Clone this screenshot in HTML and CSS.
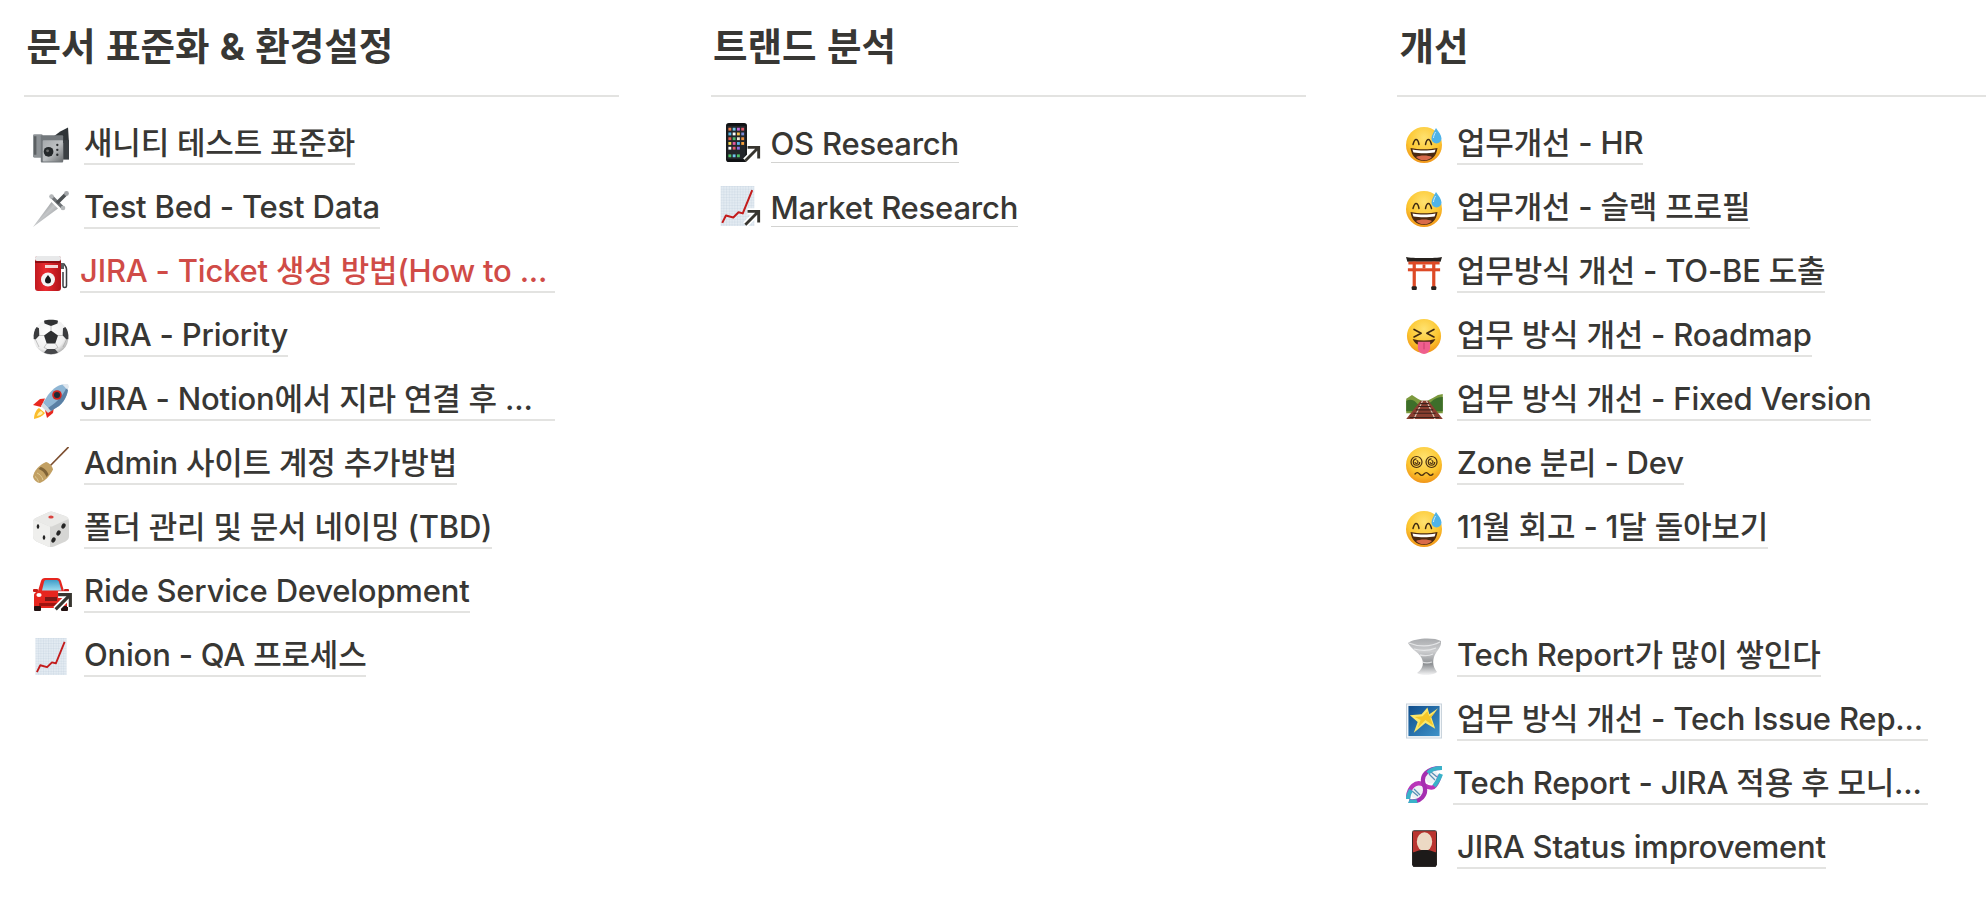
FILE: index.html
```html
<!DOCTYPE html>
<html lang="ko">
<head>
<meta charset="utf-8">
<title>문서 목록</title>
<link rel="stylesheet" href="styles.css">
</head>
<body>
<svg class="sprite" xmlns="http://www.w3.org/2000/svg">
<defs>
<radialGradient id="face" cx="50%" cy="30%" r="75%"><stop offset="0" stop-color="#ffe270"/><stop offset=".6" stop-color="#fcc62f"/><stop offset="1" stop-color="#ee8b14"/></radialGradient>
<radialGradient id="ball" cx="42%" cy="38%" r="68%"><stop offset="0" stop-color="#fff"/><stop offset=".72" stop-color="#efefef"/><stop offset="1" stop-color="#a5a5a5"/></radialGradient>
<linearGradient id="steel" x1="0" y1="0" x2="1" y2="1"><stop offset="0" stop-color="#a6aaad"/><stop offset=".5" stop-color="#bdc0c2"/><stop offset="1" stop-color="#6a6e70"/></linearGradient>
<linearGradient id="blade" x1="0" y1="0" x2="1" y2="1"><stop offset="0" stop-color="#4f5357"/><stop offset=".5" stop-color="#c4c6c8"/><stop offset="1" stop-color="#767a7e"/></linearGradient>
<linearGradient id="red" x1="0" y1="0" x2="1" y2="0"><stop offset="0" stop-color="#c01a20"/><stop offset=".4" stop-color="#ea2b30"/><stop offset="1" stop-color="#b01319"/></linearGradient>
<linearGradient id="twist" x1="0" y1="0" x2="0" y2="1"><stop offset="0" stop-color="#a9abae"/><stop offset=".35" stop-color="#cdced0"/><stop offset=".7" stop-color="#8d9093"/><stop offset="1" stop-color="#f6f6f7"/></linearGradient>
<linearGradient id="night" x1="0" y1="0" x2="1" y2="1"><stop offset="0" stop-color="#0f4d8c"/><stop offset="1" stop-color="#3f93c9"/></linearGradient>
<linearGradient id="glass" x1="0" y1="0" x2="0" y2="1"><stop offset="0" stop-color="#3f9ec9"/><stop offset="1" stop-color="#9edcef"/></linearGradient>
<pattern id="grid" width="2.6" height="2.6" patternUnits="userSpaceOnUse"><rect width="2.6" height="2.6" fill="#e3ebf2"/><path d="M0 0H2.6M0 0V2.6" stroke="#bccbd9" stroke-width=".5"/></pattern>
</defs>

<symbol id="i-camera" viewBox="0 0 37 36">
<path d="M20 10 28 4 36 0 37 16 28 16Z" fill="#2f3437"/>
<rect x="0" y="7" width="10" height="24" rx="1.500" fill="#8d9296"/>
<rect x="1" y="9" width="2.500" height="19" fill="#5c6063"/>
<rect x="8" y="8" width="23" height="28" rx="1" fill="#73787c"/>
<rect x="10" y="13" width="21" height="22" rx="1" fill="url(#steel)"/>
<rect x="31" y="13" width="6" height="20" fill="#3b4043"/>
<circle cx="16" cy="25" r="5" fill="#24282a"/><circle cx="15" cy="24" r="1.500" fill="#6a6a6a"/>
<circle cx="25" cy="18" r="1.200" fill="#2b2e30"/><circle cx="25" cy="23" r="1.200" fill="#2b2e30"/><circle cx="25" cy="28" r="1.200" fill="#2b2e30"/>
</symbol>

<symbol id="i-dagger" viewBox="0 0 36 36">
<path d="M0 36 18.500 11 25 17.500Z" fill="url(#blade)"/>
<path d="M18.500 5.500 30 17" stroke="#6f7377" stroke-width="3.200" stroke-linecap="round"/>
<circle cx="18.500" cy="5.500" r="2.300" fill="#b4b7b9"/><circle cx="30" cy="17" r="2.300" fill="#b4b7b9"/>
<path d="M24 12 33 3" stroke="#4c5053" stroke-width="3.500"/>
<circle cx="33.500" cy="2.500" r="2.400" fill="#a4a7aa"/>
</symbol>

<symbol id="i-fuel" viewBox="0 0 36 36">
<rect x="2" y="1" width="26" height="35" rx="3" fill="url(#red)"/>
<rect x="2" y="1" width="26" height="5" rx="2" fill="#e8e9ea"/>
<rect x="2" y="6" width="26" height="2" fill="#8d0d12"/>
<rect x="12" y="10" width="13" height="3" fill="#f5d6d6"/>
<circle cx="15" cy="24.500" r="7" fill="#f4f4f4"/>
<path d="M15 20c2 2.500 3 3.900 3 5.400a3 3 0 0 1-6 0c0-1.500 1-2.900 3-5.400Z" fill="#16181a"/>
<path d="M28 9h3c1.500 2 2.500 3 2.500 5v17c0 2-3.500 2-3.500 0V17" fill="none" stroke="#3a3d40" stroke-width="1.500"/>
<rect x="28" y="8" width="3" height="6" fill="#5a5d60"/>
</symbol>

<symbol id="i-ball" viewBox="0 0 36 36">
<circle cx="18" cy="18" r="17.500" fill="url(#ball)"/>
<path d="M18 11.500 25 16.500 22.300 24.500H13.700L11 16.500Z" fill="#2f3032"/>
<path d="M11 1.800C14 .4 22 .4 25 1.800L24.500 4.500 18 7 11.500 4.500Z" fill="#2f3032"/>
<path d="M.7 20C.2 15 1.500 10.500 3.600 8L6 9.300 6.300 16.500 2.500 20.500Z" fill="#3b3c3e"/>
<path d="M35.300 20C35.800 15 34.500 10.500 32.400 8L30 9.300 29.700 16.500 33.500 20.500Z" fill="#3b3c3e"/>
<path d="M11 33.600 14 30H22L25 33.600C21 35.800 15 35.800 11 33.600Z" fill="#46474a"/>
<path d="M18 7V11.500M11 16.500 6.300 16.500M25 16.500 29.700 16.500M13.700 24.500 11 28.500 14 30M22.300 24.500 25 28.500 22 30M2.500 20.500 6 28M33.500 20.500 30 28" stroke="#a0a0a0" stroke-width=".6" fill="none"/>
</symbol>

<symbol id="i-rocket" viewBox="0 0 36 36">
<path d="M1 36c0-5 2-9 5-11l6 5c-2 3-6 5-11 6Z" fill="#fbbd2d"/>
<path d="M4 33c1-3 2-4 4-5l2 2c-1 1.500-3 2.500-6 3Z" fill="#fff3b0"/>
<path d="M0 22l7-6 5-.5L8 24Z" fill="#e8281f"/>
<path d="M12 27l2 8 6-5 1-6Z" fill="#e8281f"/>
<path d="M35 1c.8 8-2 16-9 22l-8 5-8-8 5-8C21 4 27 .5 35 1Z" fill="#8fb6d4"/>
<path d="M35 1c.8 8-2 16-9 22l-8 5-3-3C25 19 32 10 35 1Z" fill="#5a80a5"/>
<path d="M29 1.300c2.500-.5 4.500-.5 6-.3.300 1.700.2 3.700-.3 6Z" fill="#e2e8ee"/>
<circle cx="24" cy="12" r="4.800" fill="#d0241f"/><circle cx="24" cy="12" r="3" fill="#1c2a38"/>
<path d="M10 20l8 8-3 2-7-7Z" fill="#d3dbe2"/>
</symbol>

<symbol id="i-broom" viewBox="0 0 36 36">
<path d="M35.500 0 15 21" stroke="#7c4e2f" stroke-width="1.600"/>
<path d="M13 15c3 .5 6.500 4 7 7.500C17 29 12 34 7 36 4 36 .5 33 0 29.500 1 24 6 18 13 15Z" fill="#c2a063"/>
<path d="M7.500 20c3.500.5 7 4 8 7.500L13.500 30c-1-3.500-4.500-7-8-8Z" fill="#806437"/>
<path d="M4 26c2.500 1 5 3.500 6 7M2 29.500c1.500 1 2.500 2.500 3.500 5" stroke="#e0cc96" fill="none"/>
</symbol>

<symbol id="i-die" viewBox="0 0 36 36">
<path d="M5 6 16 1c1.500-.7 3-.7 4.500 0L32 5c3 1 4 3 4 6v14c0 2.500-1 4-3.500 5.500L21 35.500c-2 .8-4 .8-6 0L3.500 30.500C1 29 0 27.500 0 25V11C0 8.500 2 7.300 5 6Z" fill="#d6d6d4"/>
<path d="M5 6 16 1c1.500-.7 3-.7 4.500 0L32 5c2 .7 3 1.500 3.500 3L20 15c-1.500.7-3 .7-4.500 0L.7 8.500C1.500 7.500 3 6.800 5 6Z" fill="#eaeae8"/>
<path d="M.7 8.500 15.500 15c.5.2 1 .4 1.500.4V36c-.7-.1-1.300-.2-2-.5L3.500 30.500C1 29 0 27.500 0 25V11c0-1 .2-1.800.7-2.500Z" fill="#efefed"/>
<ellipse cx="18" cy="6" rx="2.700" ry="1.500" fill="#d9433f"/>
<ellipse cx="5" cy="15.500" rx="1.300" ry="2.300" fill="#252525"/>
<ellipse cx="11" cy="26.500" rx="1.300" ry="2.300" fill="#252525"/>
<ellipse cx="30.500" cy="15" rx="2" ry="2.700" transform="rotate(25 30.500 15)" fill="#252525"/>
<ellipse cx="25.500" cy="22" rx="2" ry="2.700" transform="rotate(25 25.500 22)" fill="#252525"/>
<ellipse cx="20.500" cy="29" rx="2" ry="2.700" transform="rotate(25 20.500 29)" fill="#252525"/>
</symbol>

<symbol id="i-car" viewBox="0 0 40 36">
<path d="M1 33V20c0-2 2-3 4-4l3-10c.6-2 2-3 4-3h12c2 0 3.400 1 4 3l3 10c2 1 4 2 4 4v13Z" fill="#e6261f"/>
<path d="M9 15.500 11 7c.3-1.500 1-2 2.500-2h9.500c1.500 0 2.500.5 3 2l2.500 8.500Z" fill="url(#glass)"/>
<rect x="0" y="14" width="5" height="3" rx="1" fill="#c81c16"/>
<rect x="31" y="14" width="5" height="3" rx="1" fill="#c81c16"/>
<ellipse cx="6" cy="20" rx="2.600" ry="1.900" fill="#fff"/>
<rect x="12" y="22" width="12" height="4" fill="#7a1a18"/>
<rect x="1" y="31" width="7" height="5" rx="1" fill="#211"/><rect x="28" y="31" width="7" height="5" rx="1" fill="#211"/>
<rect x="6" y="28" width="24" height="3" fill="#9f1410"/>
</symbol>

<symbol id="i-chart" viewBox="0 0 32 38">
<rect width="32" height="38" fill="url(#grid)"/>
<path d="M1.500 35 5 28 12 30 17 25 21 26 30 4" fill="none" stroke="#c31c1c" stroke-width="1.900" stroke-linejoin="round"/>
</symbol>

<symbol id="i-phone" viewBox="0 0 22 41">
<rect x="0" y="0" width="22" height="41" rx="3" fill="#101214"/>
<rect x="1.500" y="3" width="19" height="35" fill="#23262a"/>
<rect x="2.500" y="5" width="3" height="3" fill="#ef7c4d"/><rect x="7" y="5" width="3" height="3" fill="#6ec6ec"/><rect x="11.500" y="5" width="3" height="3" fill="#c76cd6"/><rect x="16" y="5" width="3" height="3" fill="#e45a6b"/>
<rect x="2.500" y="10" width="3" height="3" fill="#58b6e6"/><rect x="7" y="10" width="3" height="3" fill="#fff"/><rect x="11.500" y="10" width="3" height="3" fill="#f5c04d"/><rect x="16" y="10" width="3" height="3" fill="#7a8bd6"/>
<rect x="2.500" y="15" width="3" height="3" fill="#e45a4b"/><rect x="7" y="15" width="3" height="3" fill="#4fb86a"/><rect x="11.500" y="15" width="3" height="3" fill="#efe9d6"/><rect x="16" y="15" width="3" height="3" fill="#ea8f3e"/>
<rect x="2.500" y="20" width="3" height="3" fill="#f4d44e"/><rect x="7" y="20" width="3" height="3" fill="#e25aa0"/><rect x="11.500" y="20" width="3" height="3" fill="#58b6e6"/><rect x="16" y="20" width="3" height="3" fill="#f7a13d"/>
<rect x="2.500" y="25" width="3" height="3" fill="#fff"/><rect x="7" y="25" width="3" height="3" fill="#e45a6b"/><rect x="11.500" y="25" width="3" height="3" fill="#8f70dd"/>
<rect x="2.500" y="33" width="3" height="3" fill="#4fc46a"/><rect x="7" y="33" width="3" height="3" fill="#6ec6ec"/><rect x="11.500" y="33" width="3" height="3" fill="#4fc46a"/>
</symbol>

<symbol id="i-sweat" viewBox="0 0 36 36">
<circle cx="18" cy="18" r="18" fill="url(#face)"/>
<path d="M7 17.500c1-3.500 2-5 3-5s2.400 1.500 3 5M19.500 17.500c.6-3.500 2-5 3-5s2 1.500 3 5" fill="none" stroke="#3f2a12" stroke-width="1.500" stroke-linecap="round"/>
<path d="M4.500 21c8 1.800 19 1.800 27 0-1 8-6 13-13.500 13S5.500 29 4.500 21Z" fill="#4b2a11"/>
<path d="M6.500 22.500c7 1.300 16 1.300 23 0-.2 1.200-.5 2-1 3-6 1-15 1-21 0-.5-1-.8-1.800-1-3Z" fill="#fff"/>
<path d="M10 30c4-2 12-2 16 0-2.500 2.500-5 3.300-8 3.300s-5.500-.8-8-3.300Z" fill="#d96a4a"/>
<path d="M30 1c2.500 3.500 5.500 7 5.500 10.500a5 5 0 0 1-10 0C25.500 8 28 5 30 1Z" fill="#4fb3e8"/>
<path d="M29.500 5c-1 2-2 4-2 6" stroke="#c9edff" stroke-width="1" fill="none"/>
</symbol>

<symbol id="i-torii" viewBox="0 0 38 36">
<path d="M0 1c6 1.500 32 1.500 38 0l-1.500 5H1.500Z" fill="#26211d"/>
<rect x="2.500" y="6" width="33" height="3" fill="#dd4a26"/>
<rect x="2" y="13" width="34" height="3.200" fill="#dd4a26"/>
<rect x="17.500" y="9" width="3" height="4" fill="#dd4a26"/>
<rect x="7" y="6" width="3.400" height="27" fill="#dd4a26"/>
<rect x="27.600" y="6" width="3.400" height="27" fill="#dd4a26"/>
<rect x="6" y="32" width="5.400" height="4" rx="1" fill="#26211d"/>
<rect x="26.600" y="32" width="5.400" height="4" rx="1" fill="#26211d"/>
</symbol>

<symbol id="i-squint" viewBox="0 0 36 38">
<circle cx="18" cy="18" r="18" fill="url(#face)"/>
<path d="M7.500 11 15 15 7.500 19M28.500 11 21 15 28.500 19" fill="none" stroke="#3f2a12" stroke-width="1.700" stroke-linecap="round" stroke-linejoin="round"/>
<path d="M6 21c8 2.300 16 2.300 24 0-1.500 3.500-5 6-6 6H12c-2 0-4.500-2.500-6-6Z" fill="#4b2a11"/>
<path d="M11.500 24h13v6a6.500 7 0 0 1-13 0Z" fill="#ef5f8e"/>
<path d="M18 25v7" stroke="#c93a6c" stroke-width="1"/>
</symbol>

<symbol id="i-rail" viewBox="0 0 38 26">
<path d="M0 5 6 1 12 5 16 7H22L28 4 33 1 38 0V20H0Z" fill="#7c9a3e"/>
<path d="M0 7c4-2 8-1 10 1.500S14 11 16 11v7H0ZM38 3c-5 0-9 2-12 5l-4 3v7H38Z" fill="#3d6f2a"/>
<path d="M0 26 15 7H23L38 26Z" fill="#8a3f30"/>
<path d="M8 26 17 7M30 26 21 7" stroke="#d9c6b4" stroke-width="1.200"/>
<path d="M14.500 10H23.500M12.500 13H25.500M10 16.500H28M7.500 20H30.500M3.500 24.500H34.500" stroke="#3e211a" stroke-width="1.100"/>
</symbol>

<symbol id="i-dizzy" viewBox="0 0 36 36">
<circle cx="18" cy="18" r="18" fill="url(#face)"/>
<g fill="none" stroke="#4a2e10" stroke-width="1.200">
<circle cx="10.500" cy="15" r="5.500"/><circle cx="25.500" cy="15" r="5.500"/>
<path d="M10.500 11.800a3.200 3.200 0 1 0 3.200 3.200M10.500 13.500a1.500 1.500 0 1 1-1.500 1.500M25.500 11.800a3.200 3.200 0 1 0 3.200 3.200M25.500 13.500a1.500 1.500 0 1 1-1.500 1.500"/>
</g>
<path d="M9 27c1.500-1.800 3-1.800 4.500 0s3 1.800 4.500 0 3-1.800 4.500 0 3 1.800 4.500 0" fill="none" stroke="#4a2e10" stroke-width="1.300" stroke-linecap="round"/>
</symbol>

<symbol id="i-tornado" viewBox="0 0 33 37">
<path d="M0 5C6 0 26-1 33 3 34 9 28 13 26 19 24 26 26 30 29 34 24 38 14 38 9 35 16 30 16 24 13 19 10 14 3 11 0 5Z" fill="url(#twist)"/>
<path d="M1 5c9 4 22 4 31-1M6 11c7 2 15 2 22-1M12 17c5 1 9 1 13-1M14 24c3 1 7 1 10 0" fill="none" stroke="#eeeff0" stroke-width="1.300" opacity=".8"/>
</symbol>

<symbol id="i-star" viewBox="0 0 37 36">
<rect x=".5" y=".5" width="36" height="35" fill="#f3f6f9" stroke="#c9d3dc"/>
<rect x="2.500" y="2.500" width="32" height="31" fill="url(#night)"/>
<path d="M33 5 26 14 30 26 20 20 8 30 12 19 4 12 16 11 22 4 24 11Z" fill="#fbe76a"/>
<path d="M22 8 24 13 30 9 25 15 28 23 20 17 12 25 15 17 9 14 17 13Z" fill="#f4c72a"/>
</symbol>

<symbol id="i-dna" viewBox="0 0 37 38">
<ellipse cx="26" cy="12" rx="5.500" ry="7" transform="rotate(35 26 12)" fill="#eef2f5"/>
<ellipse cx="11" cy="27" rx="5.500" ry="7" transform="rotate(35 11 27)" fill="#eef2f5"/>
<path d="M23 9 29 15M25 7 31 12M8 24 14 30M6 26 12 31" stroke="#5a8fb5" stroke-width="1.300"/>
<path d="M2 34C2 22 10 15 18 20S30 24 34 10" fill="none" stroke="#b935b8" stroke-width="4.200"/>
<path d="M3 36C14 38 22 30 18 20S22 3 35 3" fill="none" stroke="#a52fb0" stroke-width="4.200"/>
<path d="M22 8C25 4 30 3 36 3M28 21C31 18 33 14 35 9" fill="none" stroke="#39b2c9" stroke-width="4.200"/>
<path d="M2 34C2 31 3 28 5 25M3 36C5 37 8 37 11 36" fill="none" stroke="#39b2c9" stroke-width="4.200"/>
</symbol>

<symbol id="i-card" viewBox="0 0 26 38">
<rect width="26" height="38" rx="2.500" fill="#2a2624"/>
<rect x="1" y="1" width="24" height="22" fill="#b93530"/>
<ellipse cx="13" cy="12" rx="8" ry="10" fill="#ecd9c4"/>
<path d="M1 23.500C5 21 9 20.500 13 20.500S21 21 25 23.500V38H1Z" fill="#1d1a19"/>
</symbol>

<symbol id="i-arrow" viewBox="0 0 18 18">
<path d="M5 3H15V13M15 3 3 15" fill="none" stroke="#fff" stroke-width="5.500"/>
<path d="M5 3H15V13M15 3 3 15" fill="none" stroke="#37352f" stroke-width="2.600"/>
</symbol>
</svg>

<main class="board">
<section class="col">
<h2 class="col__title">문서 표준화 &amp; 환경설정</h2>
<ul class="list">
<li class="row"><span class="ico"><svg class="ico__art"><use href="#i-camera"/></svg></span><a class="link">새니티 테스트 표준화</a></li>
<li class="row"><span class="ico"><svg class="ico__art"><use href="#i-dagger"/></svg></span><a class="link">Test Bed - Test Data</a></li>
<li class="row row--tight"><span class="ico"><svg class="ico__art"><use href="#i-fuel"/></svg></span><a class="link link--wide link--red">JIRA - Ticket 생성 방법(How to ...</a></li>
<li class="row"><span class="ico"><svg class="ico__art"><use href="#i-ball"/></svg></span><a class="link">JIRA - Priority</a></li>
<li class="row row--tight"><span class="ico"><svg class="ico__art"><use href="#i-rocket"/></svg></span><a class="link link--wide">JIRA - Notion에서 지라 연결 후 ...</a></li>
<li class="row"><span class="ico"><svg class="ico__art"><use href="#i-broom"/></svg></span><a class="link">Admin 사이트 계정 추가방법</a></li>
<li class="row"><span class="ico"><svg class="ico__art"><use href="#i-die"/></svg></span><a class="link">폴더 관리 및 문서 네이밍 (TBD)</a></li>
<li class="row"><span class="ico"><svg class="ico__art ico__art--car"><use href="#i-car"/></svg><svg class="ico__arrow"><use href="#i-arrow"/></svg></span><a class="link">Ride Service Development</a></li>
<li class="row"><span class="ico"><svg class="ico__art ico__art--chart"><use href="#i-chart"/></svg></span><a class="link">Onion - QA 프로세스</a></li>
</ul>
</section>

<section class="col">
<h2 class="col__title">트랜드 분석</h2>
<ul class="list">
<li class="row"><span class="ico"><svg class="ico__art ico__art--phone"><use href="#i-phone"/></svg><svg class="ico__arrow ico__arrow--inset"><use href="#i-arrow"/></svg></span><a class="link link--thin">OS Research</a></li>
<li class="row"><span class="ico"><svg class="ico__art ico__art--tall"><use href="#i-chart"/></svg><svg class="ico__arrow ico__arrow--inset"><use href="#i-arrow"/></svg></span><a class="link link--thin">Market Research</a></li>
</ul>
</section>

<section class="col">
<h2 class="col__title">개선</h2>
<ul class="list">
<li class="row"><span class="ico"><svg class="ico__art"><use href="#i-sweat"/></svg></span><a class="link">업무개선 - HR</a></li>
<li class="row"><span class="ico"><svg class="ico__art"><use href="#i-sweat"/></svg></span><a class="link">업무개선 - 슬랙 프로필</a></li>
<li class="row"><span class="ico"><svg class="ico__art"><use href="#i-torii"/></svg></span><a class="link">업무방식 개선 - TO-BE 도출</a></li>
<li class="row"><span class="ico"><svg class="ico__art"><use href="#i-squint"/></svg></span><a class="link">업무 방식 개선 - Roadmap</a></li>
<li class="row"><span class="ico"><svg class="ico__art ico__art--rail"><use href="#i-rail"/></svg></span><a class="link">업무 방식 개선 - Fixed Version</a></li>
<li class="row"><span class="ico"><svg class="ico__art"><use href="#i-dizzy"/></svg></span><a class="link">Zone 분리 - Dev</a></li>
<li class="row"><span class="ico"><svg class="ico__art"><use href="#i-sweat"/></svg></span><a class="link">11월 회고 - 1달 돌아보기</a></li>
<li class="row row--blank"></li>
<li class="row"><span class="ico"><svg class="ico__art ico__art--tornado"><use href="#i-tornado"/></svg></span><a class="link">Tech Report가 많이 쌓인다</a></li>
<li class="row"><span class="ico"><svg class="ico__art"><use href="#i-star"/></svg></span><a class="link link--clip">업무 방식 개선 - Tech Issue Rep...</a></li>
<li class="row row--tight"><span class="ico"><svg class="ico__art ico__art--dna"><use href="#i-dna"/></svg></span><a class="link link--wide">Tech Report - JIRA 적용 후 모니...</a></li>
<li class="row"><span class="ico"><svg class="ico__art ico__art--card"><use href="#i-card"/></svg></span><a class="link">JIRA Status improvement</a></li>
</ul>
</section>
</main>
</body>
</html>
```
FILE: styles.css
```css
* { box-sizing: border-box; }
html, body { margin: 0; height: 100%; background: #fff; overflow: hidden; }
body {
  font-family: Inter, "Noto Sans CJK KR", "Liberation Sans", sans-serif;
  color: #383734;
}
.sprite { position: absolute; width: 0; height: 0; }
.board {
  display: grid;
  grid-template-columns: 595px 595px 1fr;
  column-gap: 91.5px;
  padding-left: 24px;
}
.col { min-width: 0; }
.col__title {
  margin: 0;
  height: 97px;
  padding: 22px 0 0 2.5px;
  font-size: 37.5px;
  line-height: 50px;
  font-weight: 700;
  word-spacing: 1.5px;
  border-bottom: 2px solid #e3e3e1;
}
.list { margin: 0; padding: 4px 0 0 9px; list-style: none; }
.row {
  display: flex;
  align-items: flex-end;
  height: 64px;
  gap: 15px;
  white-space: nowrap;
}
.row--tight { gap: 11px; }
.ico {
  position: relative;
  flex: none;
  display: flex;
  align-items: flex-end;
  justify-content: center;
  width: 36px;
  height: 48px;
  padding-bottom: 2px;
}
.ico__art { display: block; flex: none; width: 36px; height: 36px; overflow: visible; }
.ico__art--car { width: 40px; margin-left: 4px; }
.ico__art--chart { width: 32px; height: 37px; }
.ico__art--phone { width: 21px; height: 39px; margin: 0 0 1px -2px; }
.ico__art--tall { width: 35px; height: 40px; margin: 0 0 1px -1px; }
.ico__art--rail { width: 37px; height: 25px; }
.ico__art--tornado { width: 33px; height: 37px; }
.ico__art--dna { width: 37px; height: 38px; }
.ico__art--card { width: 25px; height: 37px; }
.ico__arrow { position: absolute; right: -5px; bottom: 0; width: 22px; height: 22px; }
.ico__arrow--inset { right: -6px; bottom: 1px; width: 20px; height: 20px; }
.link {
  display: block;
  font-size: 31px;
  line-height: 40px;
  font-weight: 500;
  letter-spacing: -0.2px;
  border-bottom: 2px solid #e3e3e1;
}
.link--thin { border-bottom: 1px solid #d3d3d1; margin-bottom: 2px; line-height: 37px; }
.link--red { color: #d04b47; }
.link--wide { width: 475px; }
.link--clip { width: 471px; }
```
